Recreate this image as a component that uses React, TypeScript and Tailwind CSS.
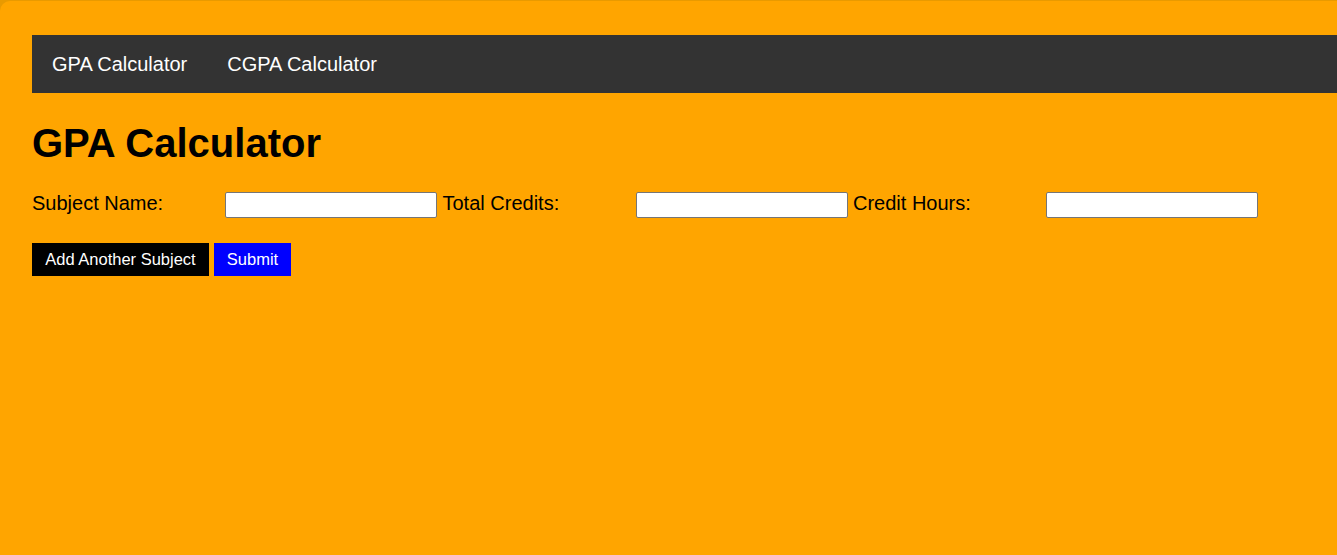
import React from 'react'

const fields = ['Subject Name:', 'Total Credits:', 'Credit Hours:']

export default function App() {
  return (
    <div className="min-h-[555px] bg-[#e99a00] overflow-hidden" style={{ fontFamily: '"Liberation Sans", Arial, sans-serif' }}>
      <div className="mt-px min-h-[554px] bg-[#ffa500] rounded-tl-[10px] pt-[34px] pl-8 text-[20px] text-black">
        {/* Nav bar */}
        <nav className="flex h-[58px] w-[1400px] items-center bg-[#333333] text-[20px] text-white">
          <a className="px-5" href="#">GPA Calculator</a>
          <a className="px-5" href="#">CGPA Calculator</a>
        </nav>

        <h1 className="mt-[27px] mb-[26px] text-[40px] font-bold leading-[46px]">GPA Calculator</h1>

        {/* Subject row */}
        <div className="flex items-start">
          {fields.map((f) => (
            <div key={f} className="flex items-start">
              <label className="w-[193px] leading-[23px]">{f}</label>
              <input
                type="text"
                className="mr-[5.5px] h-[26px] w-[212px] rounded-[2px] border border-[#767676] bg-white"
              />
            </div>
          ))}
        </div>

        <div className="mt-[25px] flex gap-[5px]">
          <button className="h-[33px] w-[177px] bg-black text-[16.5px] text-white">Add Another Subject</button>
          <button className="h-[33px] w-[77px] bg-[#0000ff] text-[16.5px] text-white">Submit</button>
        </div>
      </div>
    </div>
  )
}
